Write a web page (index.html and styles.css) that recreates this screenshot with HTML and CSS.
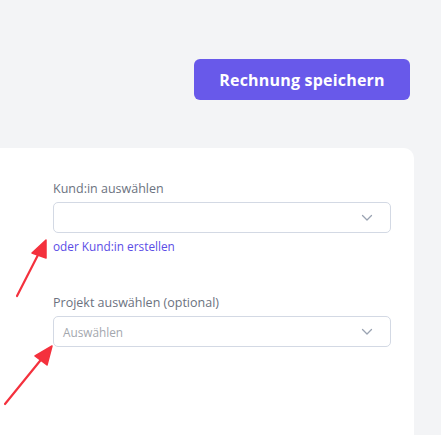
FILE: index.html
```html
<!DOCTYPE html>
<html lang="de">
<head>
<meta charset="utf-8">
<link rel="stylesheet" href="styles.css">
</head>
<body>
<div class="page">
  <div class="toolbar">
    <button class="btn-primary">Rechnung speichern</button>
  </div>
  <div class="card">
    <div class="field">
      <label class="label">Kund:in auswählen</label>
      <div class="select">
        <span class="value"></span>
        <svg class="chev" width="12" height="8" viewBox="0 0 12 8"><path d="M1.5 1.5 L6 6 L10.5 1.5" fill="none" stroke="#9aa3b2" stroke-width="1.3" stroke-linecap="round" stroke-linejoin="round"/></svg>
      </div>
      <a class="link">oder Kund:in erstellen</a>
    </div>
    <div class="field second">
      <label class="label">Projekt auswählen (optional)</label>
      <div class="select">
        <span class="placeholder">Auswählen</span>
        <svg class="chev" width="12" height="8" viewBox="0 0 12 8"><path d="M1.5 1.5 L6 6 L10.5 1.5" fill="none" stroke="#9aa3b2" stroke-width="1.3" stroke-linecap="round" stroke-linejoin="round"/></svg>
      </div>
    </div>
  </div>
</div>
<svg class="arrows" width="441" height="435" viewBox="0 0 441 435">
  <g fill="#f4313d" stroke="#f4313d" stroke-linecap="round" stroke-linejoin="round">
    <line x1="17" y1="296" x2="40" y2="251" stroke-width="2.2"/>
    <polygon points="46,240 32,253 46,258" stroke-width="1.5"/>
    <line x1="5" y1="404" x2="44" y2="356" stroke-width="2.2"/>
    <polygon points="52,346 35,356 47,365" stroke-width="1.5"/>
  </g>
</svg>
</body>
</html>
```

FILE: styles.css
```css
* { box-sizing: border-box; }
html, body {
  margin: 0;
  padding: 0;
  height: 100%;
  overflow: hidden;
}
body {
  background: #f3f4f6;
  font-family: "Open Sans", "Liberation Sans", sans-serif;
  position: relative;
}
.page {
  padding: 59px 27px 0 0;
  display: flex;
  flex-direction: column;
  height: 100%;
}
.toolbar {
  display: flex;
  justify-content: flex-end;
  padding-right: 4px;
}
.btn-primary {
  width: 216px;
  height: 41px;
  border: none;
  border-radius: 6px;
  background: #6859ea;
  color: #ffffff;
  font-family: "Open Sans", sans-serif;
  font-weight: 700;
  font-size: 16px;
  letter-spacing: 0.2px;
}
.card {
  margin-top: 48px;
  flex: 1;
  background: #ffffff;
  border-radius: 0 10px 0 0;
  padding: 32px 23px 0 53px;
}
.field {
  display: flex;
  flex-direction: column;
}
.field.second {
  margin-top: 40px;
}
.label {
  font-size: 12.5px;
  line-height: 18px;
  color: #6b7280;
  margin-bottom: 4px;
}
.select {
  height: 31px;
  border: 1px solid #d3d9e4;
  border-radius: 5px;
  display: flex;
  align-items: center;
  justify-content: space-between;
  padding: 0 17px 0 9px;
}
.placeholder {
  font-size: 11.8px;
  color: #a3a7ae;
}
.link {
  margin-top: 5px;
  font-size: 11.8px;
  line-height: 16px;
  color: #5b4de6;
}
.arrows {
  position: absolute;
  left: 0;
  top: 0;
  pointer-events: none;
}
```
